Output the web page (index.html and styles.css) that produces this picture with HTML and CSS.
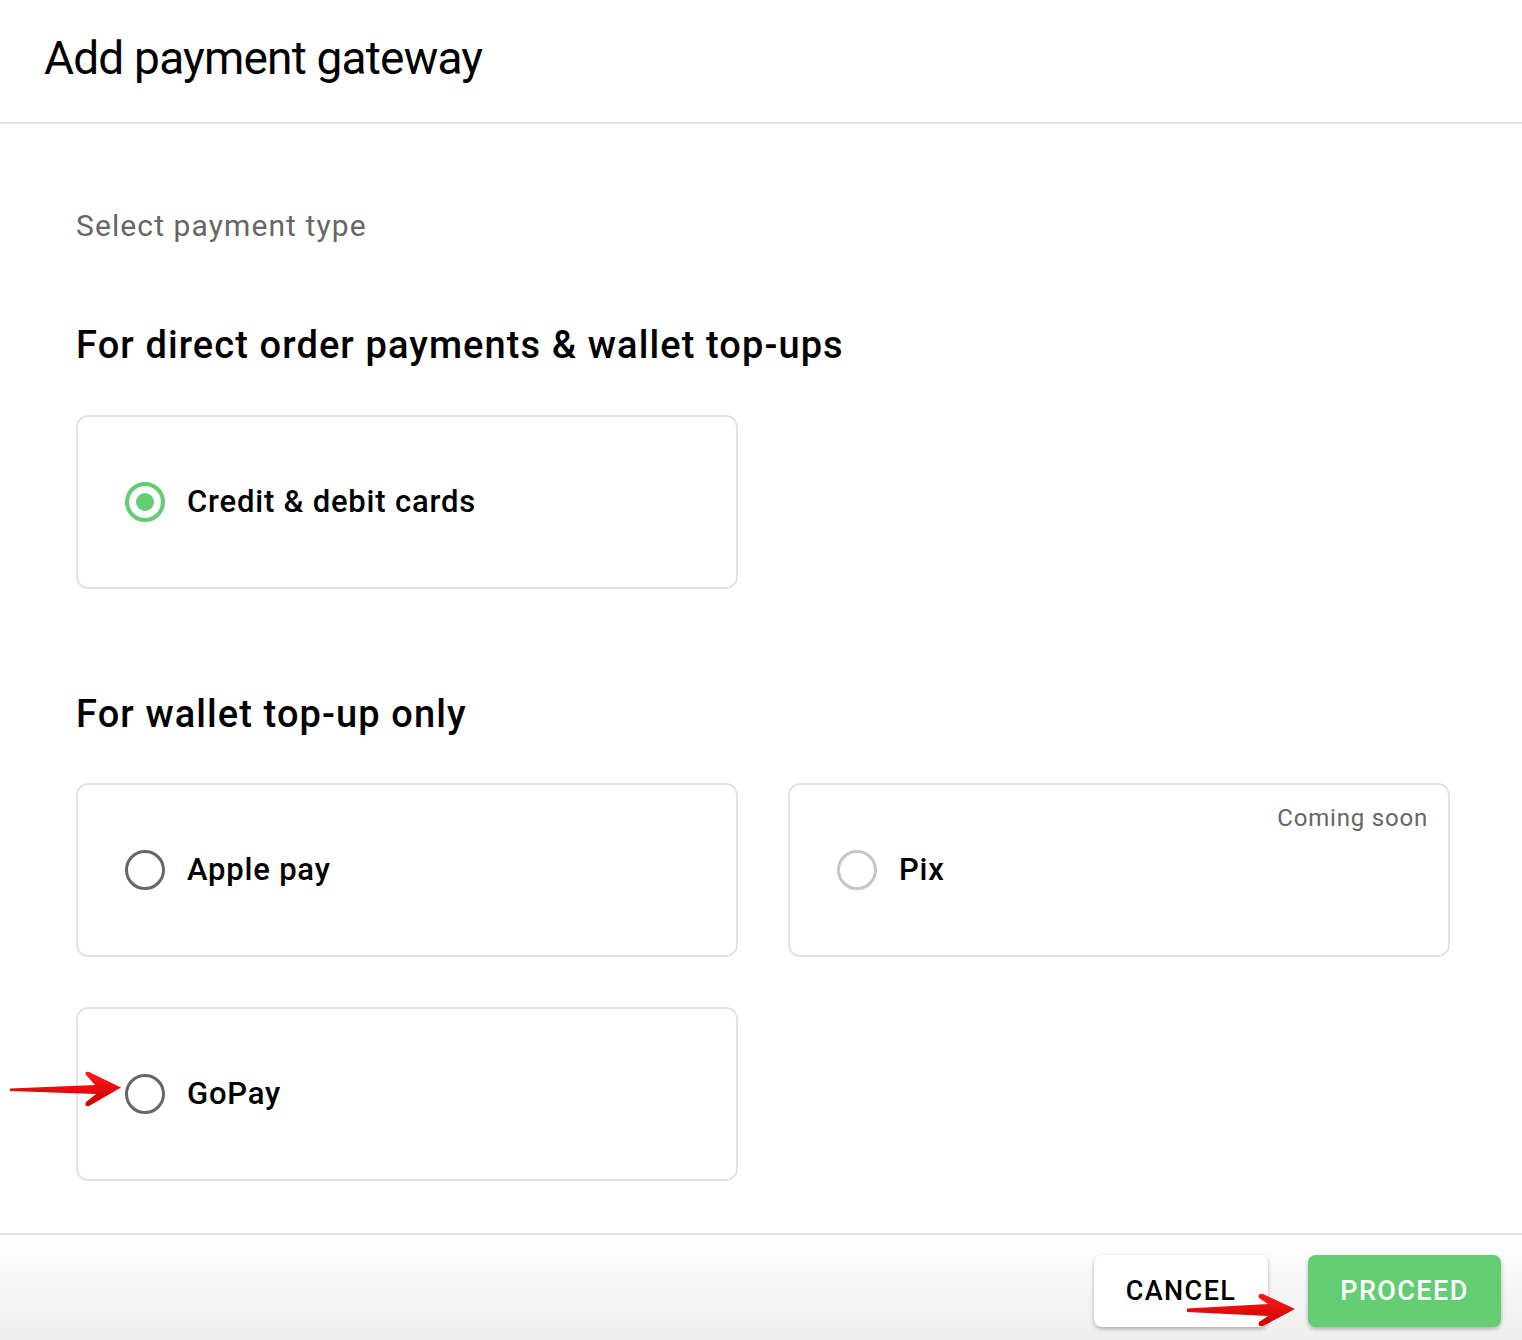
FILE: index.html
```html
<!DOCTYPE html>
<html lang="en">
<head>
<meta charset="utf-8">
<title>Add payment gateway</title>
<link rel="stylesheet" href="styles.css">
</head>
<body>
<div class="modal">
  <header class="header">
    <h1 class="title">Add payment gateway</h1>
  </header>
  <main class="content">
    <p class="subtitle">Select payment type</p>
    <h2 class="section-title first">For direct order payments &amp; wallet top-ups</h2>
    <div class="cards">
      <label class="card">
        <span class="radio checked"></span>
        <span class="card-label">Credit &amp; debit cards</span>
      </label>
    </div>
    <h2 class="section-title second">For wallet top-up only</h2>
    <div class="cards">
      <label class="card">
        <span class="radio"></span>
        <span class="card-label">Apple pay</span>
      </label>
      <label class="card disabled">
        <span class="badge">Coming soon</span>
        <span class="radio"></span>
        <span class="card-label">Pix</span>
      </label>
      <label class="card">
        <span class="radio"></span>
        <span class="card-label">GoPay</span>
      </label>
    </div>
  </main>
  <footer class="footer">
    <button class="btn btn-cancel">CANCEL</button>
    <button class="btn btn-proceed">PROCEED</button>
  </footer>
</div>
<svg class="annotations" width="1522" height="1340" viewBox="0 0 1522 1340" xmlns="http://www.w3.org/2000/svg">
  <defs>
    <linearGradient id="red" x1="0" y1="0" x2="0" y2="1">
      <stop offset="0" stop-color="#ff1a1a"/>
      <stop offset="1" stop-color="#c80000"/>
    </linearGradient>
  </defs>
  <path d="M10,1088.5 L95,1085 L86,1075 Q84,1071 89,1072 L121,1087.5 L89,1106 Q84,1107 86,1102 L96,1094 L10,1091 Z" fill="url(#red)"/>
  <path d="M1187,1308.5 L1268,1304 L1259,1298 Q1257,1293 1263,1294 L1295,1309 L1263,1326 Q1257,1327 1259,1322 L1268,1316 L1187,1312 Z" fill="url(#red)"/>
</svg>
</body>
</html>
```

FILE: styles.css
```css
* {
  box-sizing: border-box;
}

html, body {
  margin: 0;
  padding: 0;
  background: #ffffff;
}

body {
  font-family: Roboto, "Liberation Sans", Arial, sans-serif;
  color: #000;
  width: 1522px;
  height: 1340px;
  overflow: hidden;
  position: relative;
}

.modal {
  display: flex;
  flex-direction: column;
  height: 1340px;
}

.header {
  height: 124px;
  padding: 31px 44px 0;
  border-bottom: 2px solid #e2e2e2;
}

.title {
  margin: 0;
  font-size: 46px;
  line-height: 54px;
  font-weight: 400;
  letter-spacing: -0.8px;
}

.content {
  flex: 1;
  padding: 84px 72px 0 76px;
}

.subtitle {
  margin: 0;
  font-size: 30px;
  line-height: 36px;
  color: #666666;
  font-weight: 400;
  letter-spacing: 1.1px;
}

.section-title {
  margin: 0;
  font-size: 38px;
  line-height: 44px;
  font-weight: 500;
  letter-spacing: 1.1px;
}

.section-title.first {
  margin-top: 79px;
  margin-bottom: 48px;
}

.section-title.second {
  margin-top: 103px;
  margin-bottom: 47px;
}

.cards {
  display: grid;
  grid-template-columns: 662px 662px;
  grid-auto-rows: 174px;
  column-gap: 50px;
  row-gap: 50px;
}

.card {
  position: relative;
  display: flex;
  align-items: center;
  gap: 22px;
  padding-left: 47px;
  border: 2px solid #e3e3e3;
  border-radius: 12px;
  background: #fff;
}

.radio {
  width: 40px;
  height: 40px;
  border-radius: 50%;
  border: 3px solid #666666;
  flex: none;
  display: flex;
  align-items: center;
  justify-content: center;
}

.radio.checked {
  border: 4px solid #62cd72;
}

.radio.checked::after {
  content: "";
  width: 18px;
  height: 18px;
  border-radius: 50%;
  background: #62cd72;
}

.card.disabled .radio {
  border-color: #c6c6c6;
}

.card-label {
  font-size: 31px;
  line-height: 36px;
  font-weight: 500;
  color: #000;
  letter-spacing: 0.8px;
}

.badge {
  position: absolute;
  top: 18px;
  right: 20px;
  font-size: 24px;
  line-height: 30px;
  color: #666666;
  letter-spacing: 0.8px;
}

.footer {
  height: 107px;
  border-top: 2px solid #e2e2e2;
  background: linear-gradient(#ffffff, #eeeeee);
  display: flex;
  justify-content: flex-end;
  align-items: flex-start;
  gap: 40px;
  padding: 20px 21px 0 0;
}

.btn {
  height: 72px;
  border: none;
  border-radius: 8px;
  font-family: Roboto, "Liberation Sans", Arial, sans-serif;
  font-size: 27px;
  font-weight: 500;
  letter-spacing: 1.4px;
  cursor: pointer;
  box-shadow: 0 2px 4px rgba(0, 0, 0, 0.28);
}

.btn-cancel {
  width: 174px;
  background: #ffffff;
  color: #000;
}

.btn-proceed {
  width: 193px;
  background: #62cd72;
  color: #ffffff;
}

.annotations {
  position: absolute;
  top: 0;
  left: 0;
  pointer-events: none;
}
```
